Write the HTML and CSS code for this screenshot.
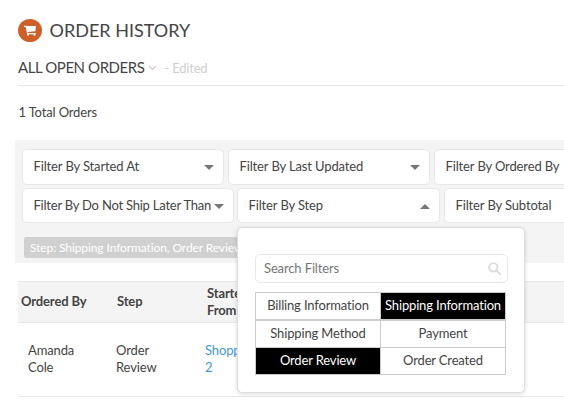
FILE: index.html
```html
<!DOCTYPE html>
<html lang="en">
<head>
<meta charset="utf-8">
<title>Order History</title>
<link rel="stylesheet" href="styles.css">
</head>
<body>
<header class="page-header">
  <span class="badge"><svg viewBox="0 0 24 23" width="24" height="23"><path d="M6 7.4h2.1l1.6 7.2h8" fill="none" stroke="#fff" stroke-width="1.1"/><path d="M8 7h9.9l-.6 5.2-8 .7z" fill="#fff"/><rect x="9" y="14.6" width="1.8" height="2" fill="#fff"/><rect x="15.6" y="14.6" width="1.8" height="2" fill="#fff"/></svg></span>
  <h1>ORDER HISTORY</h1>
</header>
<div class="view">
  <span class="view-name">ALL OPEN ORDERS</span>
  <svg class="chevron" viewBox="0 0 9 6" width="9" height="6"><path d="M.8 .8l3.7 3.7L8.2 .8" fill="none" stroke="#c8c8c8" stroke-width="1.1"/></svg>
  <span class="edited">- Edited</span>
</div>
<p class="total">1 Total Orders</p>
<section class="filters">
  <div class="filter-row first">
    <div class="filter"><span>Filter By Started At</span><i class="caret"></i></div>
    <div class="filter"><span>Filter By Last Updated</span><i class="caret"></i></div>
    <div class="filter last"><span>Filter By Ordered By</span></div>
  </div>
  <div class="filter-row second">
    <div class="filter wide"><span>Filter By Do Not Ship Later Than</span><i class="caret"></i></div>
    <div class="filter step"><span>Filter By Step</span><i class="caret up"></i>
      <div class="popup">
        <div class="search"><span>Search Filters</span><svg viewBox="0 0 13 13" width="13" height="13"><circle cx="5.3" cy="5.3" r="4.2" fill="none" stroke="#dcdcdc" stroke-width="1.9"/><path d="M8.5 8.5l3.5 3.5" stroke="#dcdcdc" stroke-width="2.1" stroke-linecap="round"/></svg></div>
        <div class="options">
          <div>Billing Information</div><div class="on">Shipping Information</div>
          <div>Shipping Method</div><div>Payment</div>
          <div class="on">Order Review</div><div>Order Created</div>
        </div>
      </div>
    </div>
    <div class="filter last"><span>Filter By Subtotal</span></div>
  </div>
  <span class="tag">Step: Shipping Information, Order Review</span>
</section>
<div class="table">
  <div class="tr head"><div>Ordered By</div><div>Step</div><div>Started<br>From</div></div>
  <div class="tr row"><div>Amanda<br>Cole</div><div>Order<br>Review</div><div><a>Shopping<br>2</a></div></div>
</div>
</body>
</html>
```

FILE: styles.css
```css
* { box-sizing: border-box; }
body {
  margin: 0;
  height: 413px;
  overflow: hidden;
  background: #fff;
  color: #444;
  font: 13px/17px Lato, sans-serif;
  letter-spacing: -.13px;
}
.page-header { display: flex; align-items: center; height: 23px; margin: 19px 0 0 18px; }
.badge { width: 24px; height: 23px; border-radius: 50%; background: #cf5f28; }
.badge svg { display: block; }
h1 { margin: 0 0 0 7.5px; font-size: 18px; line-height: 23px; font-weight: 400; letter-spacing: 0; }
.view {
  display: flex;
  align-items: center;
  height: 44px;
  margin-left: 18px;
  padding-top: 8px;
  border-bottom: 1px solid #e6e6e6;
}
.view-name { font-size: 15px; letter-spacing: -.43px; }
.chevron { margin-left: 4px; }
.edited { margin: 1px 0 0 7px; color: #d0d0d0; letter-spacing: -.2px; }
.total { margin: 18px 0 0 18.5px; letter-spacing: -.15px; }
.filters { height: 123px; margin: 19px 0 0 15px; padding: 9px 0 0 7px; background: #f4f4f4; }
.filter-row { display: flex; }
.first { gap: 4px; margin-bottom: 3px; }
.second { gap: 3px; }
.filter {
  position: relative;
  display: flex;
  flex: none;
  justify-content: space-between;
  align-items: center;
  width: 202px;
  height: 36px;
  padding: 0 9px 1px 10.5px;
  border: 1px solid #e8e8e8;
  border-radius: 5px;
  background: #fff;
  white-space: nowrap;
}
.second .filter { height: 35px; }
.filter.wide { width: 212px; letter-spacing: -.22px; }
.filter.step { width: 203px; margin-right: 1px; }
.filter.last { flex: 1; width: auto; padding-right: 0; border-right: 0; border-radius: 5px 0 0 5px; }
.caret { margin-top: 2px; border: 5px solid transparent; border-top: 5px solid #777; border-bottom: 0; }
.caret.up { border-top: 0; border-bottom: 5px solid #777; }
.tag {
  display: block;
  width: 238px;
  height: 21px;
  margin: 14px 0 0 2px;
  padding-left: 6px;
  border-radius: 2px;
  background: #d0d0d0;
  color: #fff;
  font-size: 12px;
  line-height: 21px;
  letter-spacing: -.1px;
  white-space: nowrap;
}
.popup {
  position: absolute;
  z-index: 2;
  left: -1px;
  top: 38px;
  width: 288px;
  height: 166px;
  padding: 26px 16px 0 17px;
  border: 1px solid #ddd;
  border-radius: 5px;
  background: #fff;
  box-shadow: 0 1px 4px rgba(0, 0, 0, .14);
}
.search {
  display: flex;
  justify-content: space-between;
  align-items: center;
  width: 253px;
  height: 29px;
  padding: 0 6px 0 8px;
  border: 1px solid #e8e8e8;
  border-radius: 5px;
  color: #777;
}
.options {
  display: grid;
  grid-template-columns: 124px 124px;
  grid-template-rows: 26px 26px 26px;
  column-gap: 1px;
  row-gap: 1.5px;
  width: 251px;
  height: 83px;
  margin-top: 9px;
  padding: 1px;
  background: #ccc;
  letter-spacing: -.15px;
}
.options div { background: #fff; line-height: 25px; text-align: center; }
.options .on { background: #000; color: #fff; }
.table { margin: 18px 0 0 18px; }
.tr { display: grid; grid-template-columns: 96px 90px 1fr; align-items: center; }
.head { height: 42px; padding: 0 0 1px 3px; border: solid #e8e8e8; border-width: 1px 0; background: #f4f4f4; font-weight: 700; }
.row { height: 74px; padding: 0 0 2px 10px; grid-template-columns: 88px 89px 1fr; border-bottom: 1px solid #e8e8e8; }
.row a { color: #3f97cf; }
```
